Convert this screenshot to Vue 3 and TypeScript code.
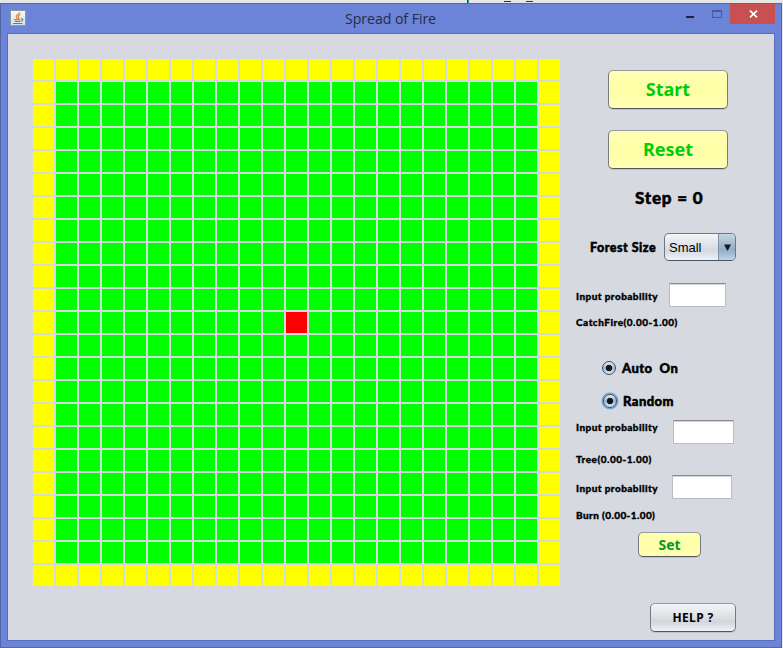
<script setup lang="ts">
import { ref, computed } from 'vue'

type Cell = 'empty' | 'tree' | 'fire'

const size = 23
const step = ref(0)
const forest = ref('Small')
const middle = (size - 1) / 2

const cells = computed<Cell[]>(() =>
  Array.from({ length: size * size }, (_, i) => {
    const row = Math.floor(i / size)
    const col = i % size
    if (row === middle && col === middle) return 'fire'
    if (row === 0 || col === 0 || row === size - 1 || col === size - 1) return 'empty'
    return 'tree'
  })
)
</script>

<template>
  <div class="desktop">
    <div class="behind">
      <i class="caret"></i><i class="dash first"></i><i class="dash"></i>
    </div>
    <div class="window">
      <header class="titlebar">
        <svg class="java" width="16" height="16" viewBox="0 0 16 16">
          <defs>
            <linearGradient id="tile" x1="0" y1="0" x2="0" y2="1">
              <stop offset="0" stop-color="#f8f8f6" />
              <stop offset="1" stop-color="#d9dee2" />
            </linearGradient>
          </defs>
          <rect x="0.5" y="0.5" width="15" height="15" rx="1" fill="url(#tile)" stroke="#8c9aa6" />
          <path d="M9.8 2.2C9.8 4.2 6 4.6 6.3 6.6C6.4 7.5 7.3 8 7.5 9M10.6 4.5C8.5 5.3 7.8 6.2 8.7 7.2C9.1 7.8 8.8 8.3 8.3 8.8" fill="none" stroke="#e8812f" stroke-width="1.2" />
          <path d="M4 9.7H10.5M11 8.8C13.6 8.2 13.4 10.8 10.8 11.2M5 11.5H10M3 13.5H12.3" fill="none" stroke="#5b7f9b" stroke-width="1.1" />
        </svg>
        <h1 class="title">Spread of Fire</h1>
        <span class="controls">
          <i class="minimize"></i>
          <i class="maximize"></i>
          <span class="close">
            <svg width="9" height="8" viewBox="0 0 9 8"><path d="M1 0.6L8 7.4M8 0.6L1 7.4" stroke="#fff" stroke-width="1.7" /></svg>
          </span>
        </span>
      </header>

      <main class="content">
        <div class="field">
          <i v-for="(cell, i) in cells" :key="i" :class="['cell', cell]"></i>
        </div>

        <section class="side">
          <button class="btn yellow start">Start</button>
          <button class="btn yellow reset">Reset</button>
          <div class="step">Step = {{ step }}</div>
          <div class="forest">
            <span class="forest-label">Forest Size</span>
            <span class="select">
              <span class="value">{{ forest }}</span>
              <span class="arrow"><svg width="7" height="7" viewBox="0 0 8 8"><path d="M0 0.5H8L4.4 7.5H3.6Z" fill="#14191e" /></svg></span>
            </span>
          </div>
          <div class="entry catch">
            <label class="small">Input probability</label><input class="box" />
          </div>
          <div class="note"><span class="small n-catch">CatchFire(0.00-1.00)</span></div>
          <div class="radio auto">
            <i class="dot"></i><span class="auto-text">Auto&nbsp; On</span>
          </div>
          <div class="radio random">
            <i class="dot focus"></i><span class="random-text">Random</span>
          </div>
          <div class="entry tree-entry">
            <label class="small">Input probability</label><input class="box" />
          </div>
          <div class="note"><span class="small n-tree">Tree(0.00-1.00)</span></div>
          <div class="entry burn-entry">
            <label class="small">Input probability</label><input class="box" />
          </div>
          <div class="note burn-note"><span class="small n-burn">Burn (0.00-1.00)</span></div>
          <button class="btn yellow set">Set</button>
          <button class="btn help">HELP ?</button>
        </section>
      </main>
    </div>
  </div>
</template>

<style>
body {
  margin: 0;
  overflow: hidden;
}
</style>

<style scoped>
* {
  box-sizing: border-box;
}
.desktop {
  width: 783px;
  height: 648px;
  background: #e4e6ec;
}
.behind {
  height: 3px;
  display: flex;
  background: #e6e6e6;
  padding-left: 467px;
}
.caret {
  width: 2px;
  height: 3px;
  background: linear-gradient(90deg, #7a2a20 50%, #1f95a0 50%);
}
.dash {
  width: 7px;
  height: 1px;
  margin-top: 1px;
  background: #333;
}
.dash.first {
  margin-left: 35px;
  margin-right: 15px;
}
.window {
  width: 782px;
  height: 645px;
  background: #6b84d7;
  border: 1px solid #5367a8;
  padding: 0 6px 6px;
}
.titlebar {
  height: 29px;
  display: grid;
  grid-template-columns: 89px 1fr 90px;
}
.java {
  margin: 6px 0 0 3px;
}
.title {
  margin: 0;
  text-align: center;
  font: 400 14.2px/29px "Open Sans", "Noto Sans", sans-serif;
  color: #252d49;
  letter-spacing: -0.08px;
}
.controls {
  display: flex;
  align-items: flex-start;
}
.minimize {
  flex: none;
  width: 8px;
  height: 2px;
  margin: 12px 0 0 1px;
  background: #20232e;
}
.maximize {
  flex: none;
  width: 10px;
  height: 8px;
  margin: 6px 0 0 18px;
  border: 1px solid #4a5b95;
  border-top-width: 2px;
}
.close {
  flex: none;
  width: 45px;
  height: 20px;
  margin-left: 8px;
  padding-left: 1px;
  background: #c75050;
  display: flex;
  align-items: center;
  justify-content: center;
}
.content {
  width: 768px;
  height: 608px;
  border: 1px solid #5a6db8;
  background: #d6d9e0;
  display: flex;
}
.field {
  flex: none;
  margin: 25px 0 0 25px;
  display: grid;
  grid-template-columns: repeat(23, 21px);
  grid-auto-rows: 21px;
  align-content: start;
  gap: 2px;
}
.cell.empty {
  background: #ff0;
}
.cell.tree {
  background: #0f0;
}
.cell.fire {
  background: #f00;
}
.side {
  margin-left: 16px;
  width: 180px;
  display: flex;
  flex-direction: column;
  align-items: flex-start;
  color: #000;
  font-family: Lato, "Liberation Sans", sans-serif;
  font-weight: 900;
  white-space: nowrap;
}
.btn {
  flex: none;
  padding: 0;
  border: 1px solid;
  border-color: #989aa0 #777980 #53565e;
  border-radius: 5px;
  box-shadow: 0 1px 0 #bfc2ca;
}
.yellow {
  background: linear-gradient(#ffffb4, #ffffa7 50%, #ffffb4);
}
.start,
.reset {
  width: 120px;
  height: 39px;
  margin-left: 32px;
  padding-bottom: 2px;
  color: #00cd0a;
  font: 700 18px "Noto Sans", sans-serif;
}
.start {
  margin-top: 36px;
}
.reset {
  margin-top: 21px;
}
.step {
  height: 58px;
  line-height: 58px;
  margin-left: 59px;
  font-size: 17px;
  letter-spacing: 0.8px;
  -webkit-text-stroke: 0.5px #000;
}
.forest {
  height: 40px;
  padding-left: 14px;
  display: flex;
  align-items: center;
}
.forest-label {
  width: 74px;
  font-size: 12.5px;
  letter-spacing: 0.5px;
  -webkit-text-stroke: 0.5px #000;
}
.select {
  width: 72px;
  height: 28px;
  border: 1px solid #6d7886;
  border-bottom-color: #43566c;
  border-radius: 5px;
  overflow: hidden;
  display: flex;
  background: linear-gradient(#f5f6f8, #dcdfe4 50%, #d5d9e0 65%, #f0f3f8);
}
.value {
  flex: 1;
  padding-left: 4px;
  font: 400 13px/27px "Liberation Sans", sans-serif;
}
.arrow {
  width: 17px;
  border-left: 1px solid #7892a9;
  display: flex;
  align-items: center;
  justify-content: center;
  background: linear-gradient(#c7d5e2, #9cb3c8 50%, #92adc4 60%, #bdd3e8);
}
.entry {
  display: flex;
  height: 24px;
}
.small {
  font-size: 10px;
  line-height: 14px;
  letter-spacing: 0.5px;
  -webkit-text-stroke: 0.35px #000;
}
.entry .small {
  width: 93px;
  letter-spacing: 0.43px;
}
.n-burn {
  letter-spacing: 0.4px;
}
.box {
  width: 57px;
  height: 24px;
  padding: 0;
  border: 1px solid #bbbdc2;
  border-top-color: #88898d;
  background: #fff;
  box-shadow: inset 0 1px 0 #d5d6d9;
}
.catch {
  margin-top: 16px;
}
.catch .small {
  padding-top: 6px;
}
.note {
  height: 30px;
  display: flex;
  align-items: center;
}
.radio {
  height: 30px;
  padding-left: 26px;
  display: flex;
  align-items: center;
  font-size: 13px;
  letter-spacing: 0.45px;
  -webkit-text-stroke: 0.5px #000;
}
.auto {
  margin-top: 16px;
}
.random {
  margin-top: 3px;
}
.dot {
  width: 14px;
  height: 14px;
  margin-right: 6px;
  border: 1px solid #3c4d60;
  border-radius: 50%;
  background: radial-gradient(circle, #101820 0 2.8px, transparent 3.6px), linear-gradient(#e6eef6, #9fb6cc 50%, #d6e6f6);
}
.dot.focus {
  margin-left: 1px;
  box-shadow: 0 0 0 1.5px #6ba3d3;
}
.tree-entry {
  margin-top: 4px;
}
.tree-entry .small {
  width: 97px;
}
.tree-entry .box {
  width: 61px;
}
.burn-entry {
  margin-top: 1px;
}
.burn-entry .small {
  width: 96px;
  padding-top: 6px;
}
.burn-entry .box {
  width: 60px;
}
.burn-note {
  height: 32px;
}
.set {
  width: 63px;
  height: 25px;
  margin: 1px 0 0 62px;
  color: #009a35;
  font: 700 14px "Noto Sans", sans-serif;
}
.help {
  width: 86px;
  height: 29px;
  margin: 46px 0 0 74px;
  color: #000;
  background: linear-gradient(#f4f5f7, #dcdee2 50%, #d2d5dc 65%, #f0f2f7);
  font: 700 12px "Noto Sans", sans-serif;
  letter-spacing: 0.35px;
}
</style>
